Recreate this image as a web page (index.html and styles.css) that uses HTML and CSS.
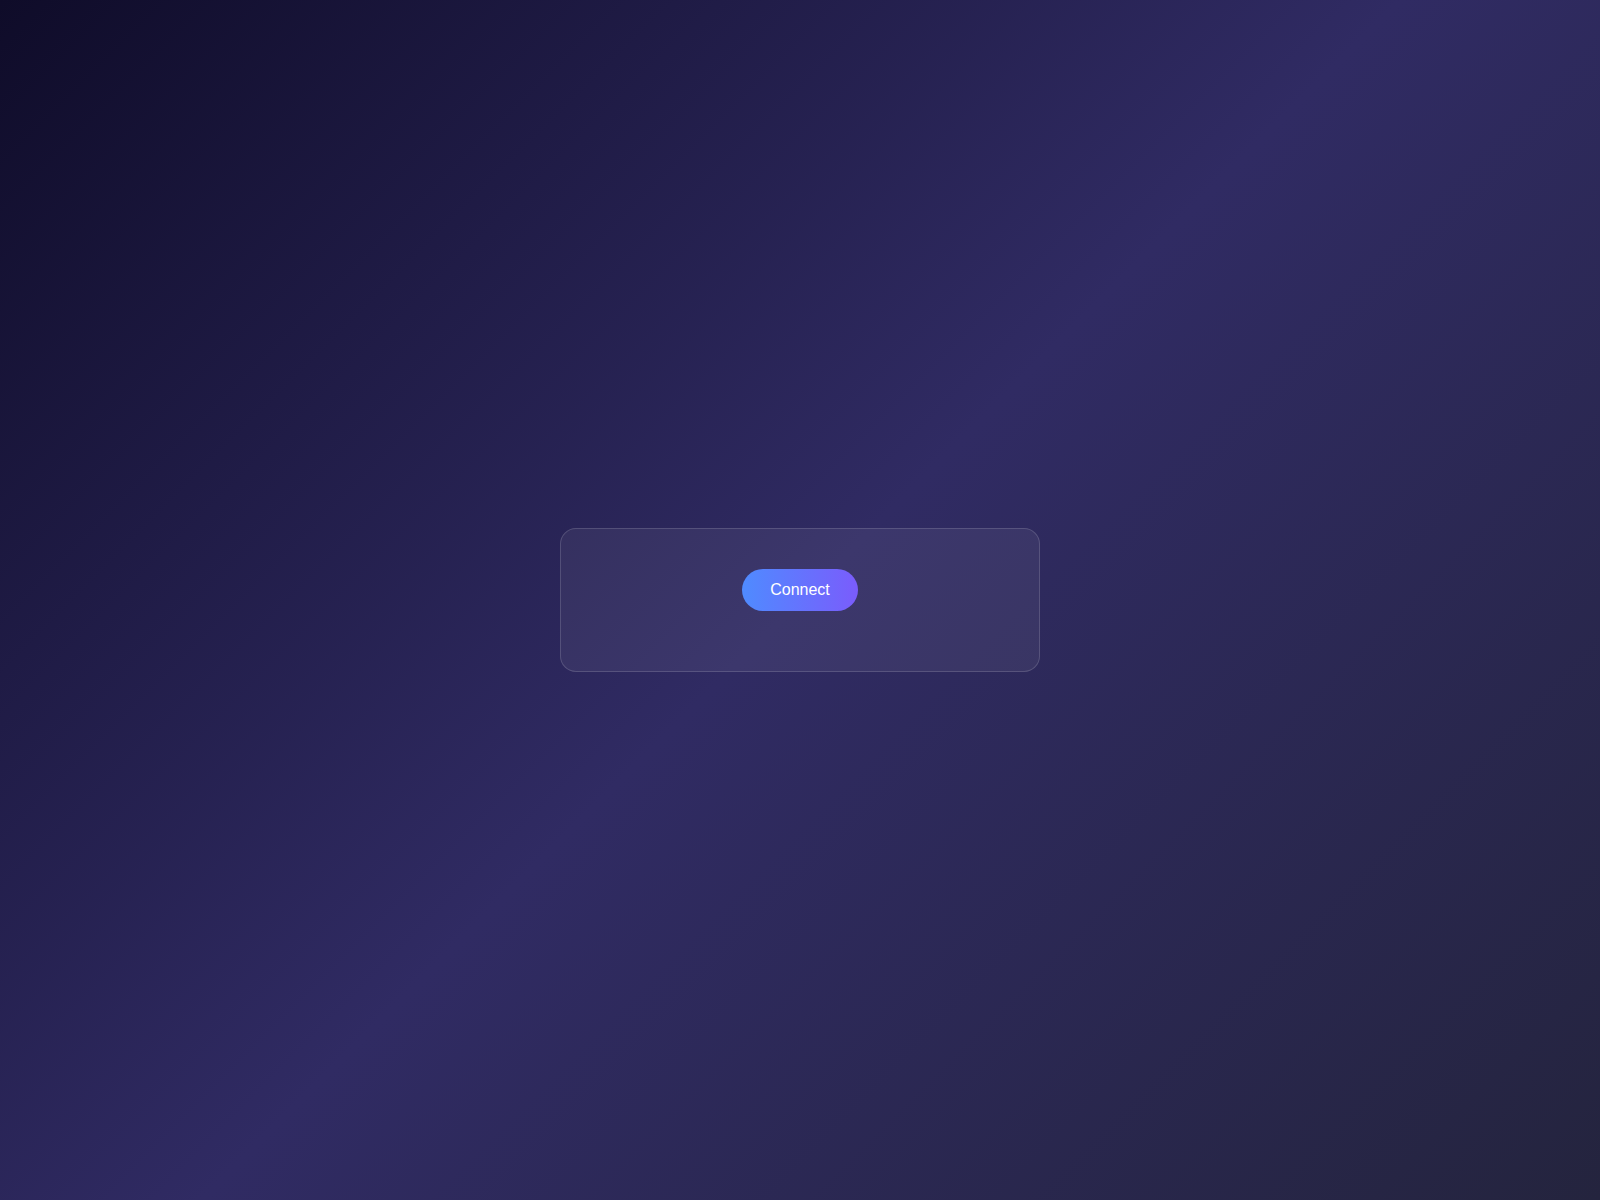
FILE: index.html
```html
<!DOCTYPE html>
<html lang="en">
<head>
<meta charset="utf-8">
<title>Connect</title>
<link rel="stylesheet" href="styles.css">
</head>
<body>
  <main class="panel">
    <button class="connect-btn" type="button">Connect</button>
    <div class="status"></div>
  </main>
</body>
</html>
```
FILE: styles.css
```css
html, body {
  margin: 0;
  height: 100%;
}

body {
  min-height: 100vh;
  display: flex;
  align-items: center;
  justify-content: center;
  background: linear-gradient(135deg, #0f0c29 0%, #302b63 50%, #24243e 100%);
  font-family: "Liberation Sans", Arial, sans-serif;
}

.panel {
  box-sizing: border-box;
  width: 480px;
  padding: 40px 40px 0;
  display: flex;
  flex-direction: column;
  align-items: center;
  background: rgba(255, 255, 255, 0.06);
  border: 1px solid rgba(255, 255, 255, 0.15);
  border-radius: 16px;
}

.connect-btn {
  height: 42px;
  padding: 0 28px;
  border: none;
  border-radius: 21px;
  background: linear-gradient(90deg, #4f8bff 0%, #7a5cfc 100%);
  color: #ffffff;
  font-family: "Liberation Sans", Arial, sans-serif;
  font-size: 16px;
  cursor: pointer;
}

.status {
  height: 60px;
}
```
